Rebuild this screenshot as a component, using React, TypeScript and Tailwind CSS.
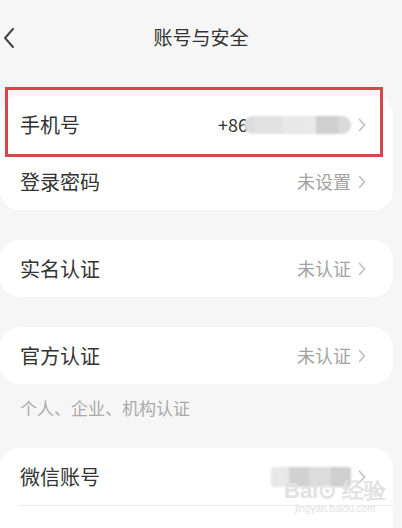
import React from "react";

const Chevron = () => (
  <svg width="8" height="14" viewBox="0 0 8 14" fill="none" className="ml-[7px] shrink-0">
    <path d="M1.5 1.5 L6.5 7 L1.5 12.5" stroke="#b8b8b8" strokeWidth="1.3" strokeLinecap="round" strokeLinejoin="round" />
  </svg>
);

const Row = ({ label, value, children }: { label: string; value?: string; children?: React.ReactNode }) => (
  <div className="flex h-[57px] items-center pl-[20px] pr-[27px]">
    <span className="text-[20px] text-[#333]">{label}</span>
    <div className="ml-auto flex items-center">
      {value && <span className="text-[18px] text-[#a3a3a3]">{value}</span>}
      {children}
      <Chevron />
    </div>
  </div>
);

export default function App() {
  return (
    <div
      className="relative h-[528px] w-[402px] overflow-hidden bg-[#f6f6f6]"
      style={{ fontFamily: '"Noto Sans CJK SC", "Noto Sans", sans-serif' }}
    >
      {/* header */}
      <div className="relative flex h-[74px] items-center justify-center">
        <svg width="14" height="22" viewBox="0 0 14 22" fill="none" className="absolute left-[2px] top-[27px]">
          <path d="M11 2 L3 11 L11 20" stroke="#444" strokeWidth="2" strokeLinecap="round" strokeLinejoin="round" />
        </svg>
        <span className="text-[19px] text-[#333]">账号与安全</span>
      </div>

      <div className="mr-[9px] mt-[22px] flex flex-col">
        {/* card 1 */}
        <div className="relative rounded-[20px] bg-white">
          <Row label="手机号">
            <span className="text-[18px] text-[#333]">+86</span>
            <div className="ml-[-4px] flex h-[18px] w-[107px] overflow-hidden rounded-full bg-[#e6e6e6] blur-[1px]">
              <div className="w-[10px] bg-[#dcdcdc]" />
              <div className="w-[28px] bg-[#e2e2e2]" />
              <div className="w-[22px] bg-[#e8e8e8]" />
              <div className="w-[12px] bg-[#e9e9e9]" />
              <div className="w-[22px] bg-[#cfcfcf]" />
              <div className="w-[13px] bg-[#dadada]" />
            </div>
          </Row>
          <Row label="登录密码" value="未设置" />
          <div className="pointer-events-none absolute left-[5px] top-[-9px] h-[70px] w-[378px] border-[3px] border-[#d5474a]" />
        </div>

        {/* card 2 */}
        <div className="mt-[30px] rounded-[20px] bg-white">
          <Row label="实名认证" value="未认证" />
        </div>

        {/* card 3 */}
        <div className="mt-[30px] rounded-[20px] bg-white">
          <Row label="官方认证" value="未认证" />
        </div>
        <div className="flex h-[48px] items-center pl-[20px] text-[17px] text-[#aaa]">个人、企业、机构认证</div>

        {/* card 4 */}
        <div className="mt-[16px] rounded-[20px] bg-white">
          <Row label="微信账号">
            <div className="flex h-[20px] w-[80px] overflow-hidden rounded-[3px] bg-[#e4e4e4] blur-[1px]">
              <div className="w-[18px] bg-[#e8e8e8]" />
              <div className="w-[20px] bg-[#d2d2d2]" />
              <div className="w-[22px] bg-[#dcdcdc]" />
              <div className="w-[20px] bg-[#cfcfcf]" />
            </div>
          </Row>
          <div className="ml-[18px] h-px bg-[#ececec]" />
          <div className="pt-[9px]">
            <Row label="微博账号" value="未绑定" />
          </div>
        </div>
      </div>

      {/* watermark */}
      <div className="pointer-events-none absolute left-[284px] top-[480px] flex flex-col items-center leading-none text-[#e2e2e2]">
        <span className="text-[22px] font-bold" style={{ fontFamily: '"Liberation Sans", sans-serif' }}>Bai⊙ 经验</span>
        <span className="mt-[2px] text-[10px]" style={{ fontFamily: '"Liberation Sans", sans-serif' }}>jingyan.baidu.com</span>
      </div>
    </div>
  );
}
